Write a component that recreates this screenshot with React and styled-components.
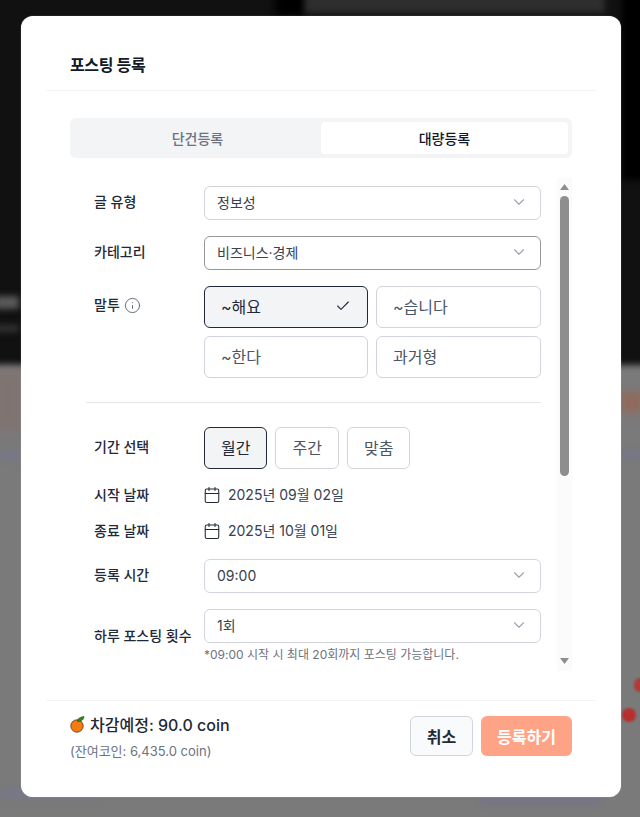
import React from 'react';
import styled, { createGlobalStyle } from 'styled-components';
import { ChevronDown, Check, Info, Calendar } from 'lucide-react';

const GlobalStyle = createGlobalStyle`
  * { box-sizing: border-box; }
  html, body { margin: 0; padding: 0; height: 100%; }
  body {
    font-family: Inter, "Noto Sans CJK KR", sans-serif;
    color: #1f2937;
    overflow: hidden;
  }
`;

const Page = styled.div`
  position: relative;
  width: 640px;
  height: 817px;
  overflow: hidden;
  background: #7a7a7a;
  display: flex;
  justify-content: center;
  padding: 16px 19px 20px 21px;
`;

const Backdrop = styled.div`
  position: absolute;
  inset: 0;
  overflow: hidden;
`;

const Blur = styled.div`
  position: absolute;
  left: ${(p) => p.$x}px;
  top: ${(p) => p.$y}px;
  width: ${(p) => p.$w}px;
  height: ${(p) => p.$h}px;
  background: ${(p) => p.$c};
  border-radius: ${(p) => p.$r || 0}px;
  filter: blur(${(p) => p.$b || 3}px);
`;

const Modal = styled.div`
  position: relative;
  width: 600px;
  height: 781px;
  background: #fff;
  border-radius: 12px;
  padding: 0 25px;
  display: flex;
  flex-direction: column;
  box-shadow: 0 0 1px rgba(255, 255, 255, 0.6);
`;

const Header = styled.header`
  height: 75px;
  padding: 38px 24px 0;
  border-bottom: 1px solid #f3f4f6;
  flex: none;
`;

const Title = styled.h2`
  margin: 0;
  font-size: 16px;
  line-height: 22px;
  font-weight: 600;
  letter-spacing: -0.4px;
  color: #111827;
`;

const Body = styled.div`
  flex: 1;
  min-height: 0;
  padding: 27px 24px 0;
  display: flex;
  flex-direction: column;
`;

const Tabs = styled.div`
  display: flex;
  height: 40px;
  padding: 4px;
  background: #f3f4f6;
  border-radius: 6px;
  flex: none;
`;

const Tab = styled.div`
  flex: 1;
  display: flex;
  align-items: center;
  justify-content: center;
  font-size: 14px;
  font-weight: 500;
  border-radius: 4px;
  color: ${(p) => (p.$active ? '#111827' : '#6b7280')};
  background: ${(p) => (p.$active ? '#fff' : 'transparent')};
`;

const Scroller = styled.div`
  position: relative;
  margin-top: 20px;
  height: 493px;
  flex: none;
  overflow: hidden;
  padding: 8px 31px 0 16px;
`;

const Row = styled.div`
  display: flex;
  align-items: ${(p) => (p.$top ? 'flex-start' : 'center')};
  margin-bottom: ${(p) => p.$mb ?? 16}px;
`;

const Label = styled.div`
  width: 118px;
  flex: none;
  padding-left: 8px;
  padding-top: ${(p) => p.$pt || 0}px;
  font-size: 14px;
  font-weight: 500;
  color: #1f2937;
  display: flex;
  align-items: center;
  gap: 4px;
  line-height: 20px;
`;

const FieldLabel = styled(Label)`
  line-height: 18px;
  padding-bottom: 2px;
`;

const Control = styled.div`
  flex: 1;
  min-width: 0;
`;

const Select = styled.div`
  height: 34px;
  padding: 0 12px 2px;
  border: 1px solid ${(p) => (p.$focus ? '#979797' : '#d1d5db')};
  border-radius: 6px;
  background: #fff;
  display: flex;
  align-items: center;
  justify-content: space-between;
  font-size: 14px;
  color: #374151;
  svg { color: #9ca3af; }
`;

const ToneGrid = styled.div`
  display: grid;
  grid-template-columns: 164px 165px;
  gap: 8px;
`;

const Choice = styled.div`
  height: 42px;
  padding: 0 16px 2px;
  display: flex;
  align-items: center;
  justify-content: space-between;
  border-radius: 6px;
  font-size: 16px;
  color: ${(p) => (p.$on ? '#1f2937' : '#4b5563')};
  border: 1px solid ${(p) => (p.$on ? '#1f2937' : '#d1d5db')};
  background: ${(p) => (p.$on ? '#f3f4f6' : '#fff')};
`;

const Divider = styled.div`
  height: 1px;
  background: #e5e7eb;
  margin: 24px 0;
`;

const Periods = styled.div`
  display: flex;
  gap: 8px;
`;

const DateValue = styled.div`
  display: flex;
  align-items: center;
  gap: 7px;
  margin-left: -1px;
  font-size: 14px;
  line-height: 20px;
  color: #374151;
  svg { color: #1f2937; }
`;

const Hint = styled.div`
  margin-top: 4px;
  font-size: 12px;
  line-height: 16px;
  color: #6b7280;
`;

const Track = styled.div`
  position: absolute;
  top: 0;
  right: 0;
  bottom: 0;
  width: 15px;
  background: #fbfbfb;
`;

const Thumb = styled.div`
  position: absolute;
  left: 3px;
  top: 18px;
  width: 9px;
  height: 280px;
  border-radius: 5px;
  background: #8e8e8e;
`;

const Arrow = styled.svg`
  position: absolute;
  left: 3px;
  width: 9px;
  height: 6px;
  ${(p) => (p.$down ? 'bottom: 7px;' : 'top: 6px;')}
`;

const Footer = styled.footer`
  margin-top: auto;
  height: 97px;
  flex: none;
  border-top: 1px solid #f3f4f6;
  padding: 15px 24px 0;
  display: flex;
  justify-content: space-between;
  align-items: flex-start;
`;

const Cost = styled.div`
  display: flex;
  align-items: center;
  gap: 5px;
  font-size: 16px;
  line-height: 16px;
  font-weight: 500;
  color: #1f2937;
`;

const Balance = styled.div`
  margin-top: 9px;
  font-size: 13px;
  line-height: 18px;
  color: #6b7280;
`;

const Actions = styled.div`
  display: flex;
  gap: 8px;
`;

const Button = styled.div`
  height: 40px;
  padding: 0 16px;
  display: flex;
  align-items: center;
  justify-content: center;
  border-radius: 6px;
  font-size: 16px;
  font-weight: 600;
  color: ${(p) => (p.$primary ? '#fff' : '#1f2937')};
  background: ${(p) => (p.$primary ? '#ffa387' : '#f9fafb')};
  border: ${(p) => (p.$primary ? 'none' : '1px solid #d1d5db')};
`;

const Tangerine = () => (
  <svg width="15" height="17" viewBox="0 0 15 17">
    <circle cx="7" cy="10" r="6.2" fill="#f47b12" stroke="#5b3410" strokeWidth="0.8" />
    <path d="M7 5 C8 2 11 1 14 0.5 C14 3 12 5.5 8 5.5 Z" fill="#2f8a1e" stroke="#1d4d12" strokeWidth="0.6" />
  </svg>
);

const FormSelect = ({ value, focus }) => (
  <Select $focus={focus}>
    {value}
    <ChevronDown size={18} strokeWidth={1.5} />
  </Select>
);

export default function App() {
  return (
    <Page>
      <GlobalStyle />
      <Backdrop>
        <Blur $x={-10} $y={-10} $w={660} $h={375} $c="#111" />
        <Blur $x={275} $y={-10} $w={30} $h={26} $c="#000" $b={4} />
        <Blur $x={305} $y={-10} $w={300} $h={23} $c="#2e2e2e" />
        <Blur $x={622} $y={-10} $w={30} $h={190} $c="#000" />
        <Blur $x={-5} $y={296} $w={24} $h={13} $c="#5a5a5a" />
        <Blur $x={-5} $y={325} $w={24} $h={7} $c="#333" />
        <Blur $x={-5} $y={370} $w={26} $h={60} $c="#7f7370" $b={6} />
        <Blur $x={0} $y={452} $w={21} $h={8} $c="#76768a" />
        <Blur $x={0} $y={790} $w={100} $h={8} $c="#77778c" />
        <Blur $x={620} $y={392} $w={24} $h={20} $c="#906a5c" $b={4} />
        <Blur $x={622} $y={450} $w={20} $h={8} $c="#75758a" />
        <Blur $x={480} $y={796} $w={120} $h={8} $c="#74748a" />
        <Blur $x={634} $y={678} $w={12} $h={14} $c="#b03a3a" $r={7} $b={1} />
        <Blur $x={622} $y={708} $w={14} $h={14} $c="#b82f2f" $r={7} $b={1} />
      </Backdrop>
      <Modal>
        <Header>
          <Title>포스팅 등록</Title>
        </Header>
        <Body>
          <Tabs>
            <Tab>단건등록</Tab>
            <Tab $active>대량등록</Tab>
          </Tabs>
          <Scroller>
            <Row>
              <FieldLabel>글 유형</FieldLabel>
              <Control><FormSelect value="정보성" /></Control>
            </Row>
            <Row>
              <FieldLabel>카테고리</FieldLabel>
              <Control><FormSelect value="비즈니스·경제" focus /></Control>
            </Row>
            <Row $top $mb={0}>
              <Label $pt={9}>
                말투
                <Info size={17} strokeWidth={1.2} color="#4b5563" />
              </Label>
              <Control>
                <ToneGrid>
                  <Choice $on>~해요<Check size={16} strokeWidth={1.6} /></Choice>
                  <Choice>~습니다</Choice>
                  <Choice>~한다</Choice>
                  <Choice>과거형</Choice>
                </ToneGrid>
              </Control>
            </Row>
            <Divider />
            <Row $mb={16}>
              <FieldLabel>기간 선택</FieldLabel>
              <Control>
                <Periods>
                  <Choice $on>월간</Choice>
                  <Choice>주간</Choice>
                  <Choice>맞춤</Choice>
                </Periods>
              </Control>
            </Row>
            <Row $mb={16}>
              <Label>시작 날짜</Label>
              <DateValue><Calendar size={18} strokeWidth={1.4} />2025년 09월 02일</DateValue>
            </Row>
            <Row $mb={18}>
              <Label>종료 날짜</Label>
              <DateValue><Calendar size={18} strokeWidth={1.4} />2025년 10월 01일</DateValue>
            </Row>
            <Row>
              <FieldLabel>등록 시간</FieldLabel>
              <Control><FormSelect value="09:00" /></Control>
            </Row>
            <Row $mb={0}>
              <Label>하루 포스팅 횟수</Label>
              <Control>
                <FormSelect value="1회" />
                <Hint>*09:00 시작 시 최대 20회까지 포스팅 가능합니다.</Hint>
              </Control>
            </Row>
            <Track>
              <Arrow viewBox="0 0 9 6"><path d="M4.5 0 L9 6 H0 Z" fill="#8e8e8e" /></Arrow>
              <Thumb />
              <Arrow $down viewBox="0 0 9 6"><path d="M0 0 H9 L4.5 6 Z" fill="#8e8e8e" /></Arrow>
            </Track>
          </Scroller>
        </Body>
        <Footer>
          <div>
            <Cost><Tangerine />차감예정: 90.0 coin</Cost>
            <Balance>(잔여코인: 6,435.0 coin)</Balance>
          </div>
          <Actions>
            <Button>취소</Button>
            <Button $primary>등록하기</Button>
          </Actions>
        </Footer>
      </Modal>
    </Page>
  );
}
